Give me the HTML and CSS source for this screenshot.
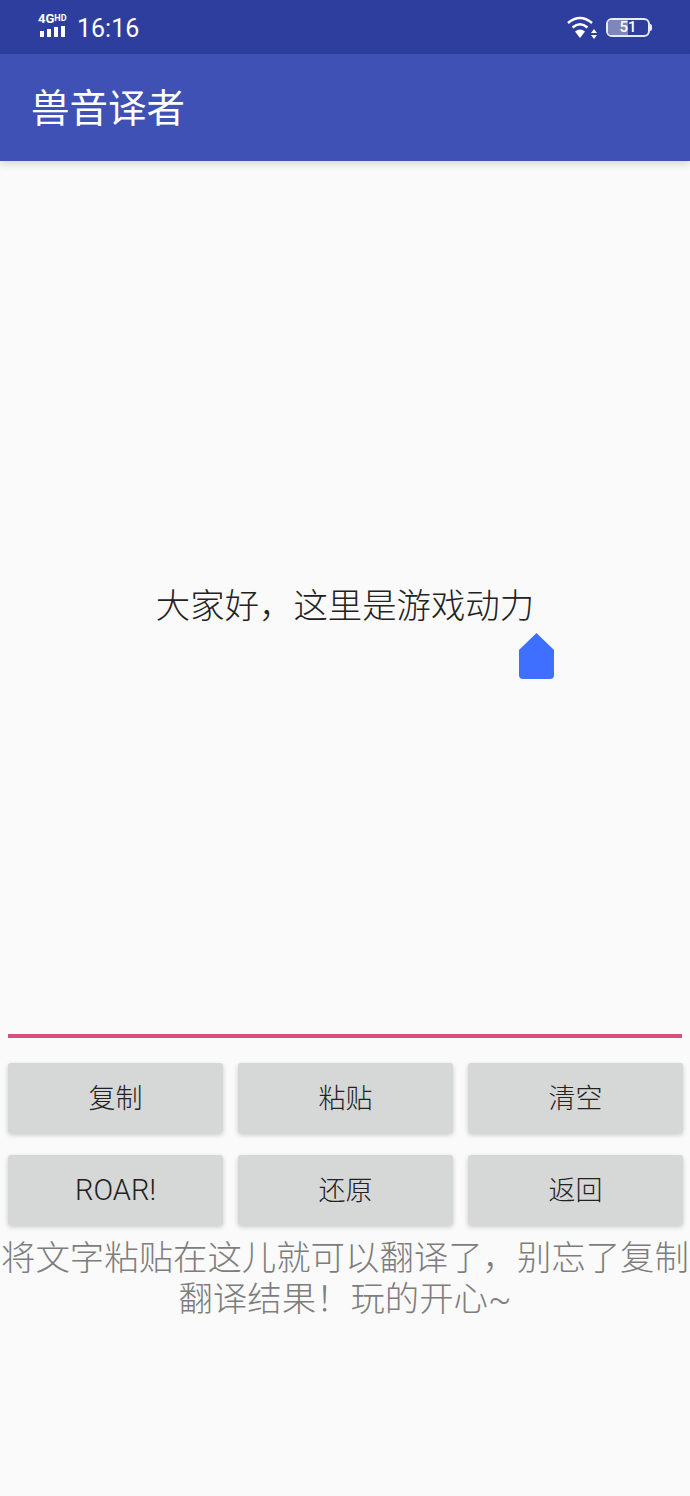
FILE: index.html
```html
<!DOCTYPE html>
<html lang="zh">
<head>
  <meta charset="UTF-8" />
  <meta name="viewport" content="width=device-width, initial-scale=1.0"/>
  <title>兽音译者</title>
  <link rel="stylesheet" href="styles.css">
</head>
<body>
  <div class="status-bar">
    <div class="status-left">
      <div class="signal">
        <div class="signal-label">4G<span class="hd">HD</span></div>
        <div class="signal-bars">
          <span class="bar b1"></span>
          <span class="bar b2"></span>
          <span class="bar b3"></span>
          <span class="bar b4"></span>
        </div>
      </div>
      <span class="clock">16:16</span>
    </div>
    <div class="status-right">
      <svg class="wifi" width="32" height="24" viewBox="0 0 32 24">
        <path d="M1 8 Q13 -2 25 8" fill="none" stroke="#fff" stroke-width="2.6"/>
        <path d="M5.5 12.5 Q13 6 20.5 12.5" fill="none" stroke="#fff" stroke-width="2.6"/>
        <path d="M13 23 L8 16.5 Q13 12.5 18 16.5 Z" fill="#fff"/>
        <path d="M27 14 L30 18 L24 18 Z M27 24 L30 20 L24 20 Z" fill="#fff"/>
      </svg>
      <div class="battery">
        <div class="battery-fill"></div>
        <span class="battery-num">51</span>
      </div>
      <div class="battery-tip"></div>
    </div>
  </div>

  <div class="app-bar">兽音译者</div>

  <div class="content">
    <div class="output-area">
      <p class="output-text">大家好，这里是游戏动力</p>
      <svg class="cursor-handle" width="35" height="46" viewBox="0 0 35 46">
        <path d="M17.500 0 L35 17 L35 42 Q35 46 31 46 L4 46 Q0 46 0 42 L0 17 Z" fill="#3f6fff"/>
      </svg>
    </div>
    <div class="underline"></div>
    <div class="button-grid">
      <button class="btn">复制</button>
      <button class="btn">粘贴</button>
      <button class="btn">清空</button>
      <button class="btn btn-latin">ROAR!</button>
      <button class="btn">还原</button>
      <button class="btn">返回</button>
    </div>
    <p class="hint">将文字粘贴在这儿就可以翻译了，别忘了复制翻译结果！玩的开心~</p>
  </div>
</body>
</html>
```

FILE: styles.css
```css
* {
  margin: 0;
  padding: 0;
  box-sizing: border-box;
}

html, body {
  height: 100%;
  font-family: Roboto, "Noto Sans CJK SC", sans-serif;
  background: #fafafa;
  overflow: hidden;
}

/* Status bar */
.status-bar {
  height: 54px;
  background: #2e3e9e;
  color: #fff;
  display: flex;
  justify-content: space-between;
  align-items: center;
  padding: 0 38px;
}

.status-left {
  display: flex;
  align-items: center;
  gap: 9px;
}

.signal {
  width: 30px;
  margin-top: -5px;
}

.signal-label {
  font-size: 13px;
  font-weight: 700;
  line-height: 12px;
  white-space: nowrap;
}

.hd {
  font-size: 9px;
  vertical-align: 2px;
}

.signal-bars {
  display: flex;
  align-items: flex-end;
  gap: 3px;
  height: 11px;
  margin-top: 1px;
  padding-left: 2px;
}

.bar {
  width: 4px;
  background: #fff;
}

.b1 { height: 6px; }
.b2 { height: 8px; }
.b3 { height: 10px; }
.b4 { height: 11px; }

.clock {
  font-size: 25px;
  line-height: 30px;
  margin-top: 3px;
}

.status-right {
  display: flex;
  align-items: center;
}

.wifi {
  margin-right: 7px;
}

.battery {
  position: relative;
  width: 44px;
  height: 19px;
  border: 2px solid #e8eaf6;
  border-radius: 6px;
  overflow: hidden;
  display: flex;
  align-items: center;
  justify-content: center;
}

.battery-fill {
  position: absolute;
  left: 0;
  top: 0;
  bottom: 0;
  width: 51%;
  background: #7f86b8;
}

.battery-num {
  position: relative;
  font-size: 15px;
  font-weight: 500;
  line-height: 15px;
}

.battery-tip {
  width: 2px;
  height: 7px;
  background: #e8eaf6;
  border-radius: 0 2px 2px 0;
}

/* App bar */
.app-bar {
  height: 107px;
  background: #3f51b5;
  color: #fff;
  font-size: 38.5px;
  line-height: 110px;
  padding-left: 31px;
  box-shadow: 0 3px 8px rgba(0,0,0,0.15);
  position: relative;
}

/* Main content */
.content {
  padding: 0 8px;
}

.output-area {
  position: relative;
  height: 873px;
  display: flex;
  align-items: center;
  justify-content: center;
}

.output-text {
  font-size: 34.4px;
  line-height: 44px;
  color: #222;
  font-weight: 300;
  white-space: nowrap;
  margin-top: 17px;
}

.cursor-handle {
  position: absolute;
  left: 511px;
  top: 472px;
}

.underline {
  height: 4px;
  background: #d9507f;
}

.button-grid {
  display: grid;
  grid-template-columns: repeat(3, 215px);
  justify-content: space-between;
  gap: 22px 15px;
  margin-top: 25px;
}

.btn {
  height: 70px;
  background: #d6d7d7;
  border: none;
  border-radius: 3px;
  box-shadow: 0 2px 5px rgba(0,0,0,0.2);
  font-family: inherit;
  font-size: 27px;
  font-weight: 300;
  color: #222;
  padding-bottom: 3px;
}

.btn-latin {
  font-size: 29px;
  font-weight: 300;
  padding-bottom: 0;
}

.hint {
  margin: 13px -8px 0;
  font-size: 34.4px;
  line-height: 41px;
  font-weight: 300;
  color: #7d7d7d;
  text-align: center;
}
```
